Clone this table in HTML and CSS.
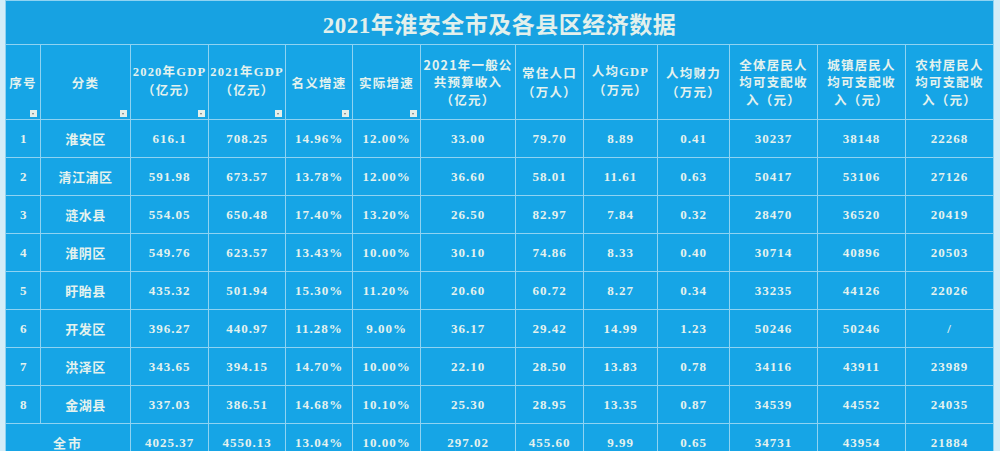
FILE: index.html
```html
<!DOCTYPE html>
<html lang="zh">
<head>
<meta charset="utf-8">
<title>2021年淮安全市及各县区经济数据</title>
<link rel="stylesheet" href="styles.css">
</head>
<body>
<div class="page">
<table class="data">
<colgroup>
<col class="c-seq"><col class="c-name"><col class="c-gdp20"><col class="c-gdp21"><col class="c-nom"><col class="c-real"><col class="c-budget"><col class="c-pop"><col class="c-pgdp"><col class="c-pfin"><col class="c-inc"><col class="c-inc"><col class="c-inc">
</colgroup>
<thead>
<tr class="title-row"><th colspan="13" class="title">2021年淮安全市及各县区经济数据</th></tr>
<tr class="head-row">
<th class="hf">序号<span class="filter"></span></th>
<th class="hf">分类<span class="filter"></span></th>
<th class="hf num-h">2020年GDP<br>（亿元）<span class="filter"></span></th>
<th class="hf num-h">2021年GDP<br>（亿元）<span class="filter"></span></th>
<th class="hf">名义增速<span class="filter"></span></th>
<th class="hf">实际增速<span class="filter"></span></th>
<th class="h3">2021年一般公<br>共预算收入<br>（亿元）</th>
<th>常住人口<br>（万人）</th>
<th class="num-h">人均GDP<br>（万元）</th>
<th>人均财力<br>（万元）</th>
<th class="h3">全体居民人<br>均可支配收<br>入（元）</th>
<th class="h3">城镇居民人<br>均可支配收<br>入（元）</th>
<th class="h3">农村居民人<br>均可支配收<br>入（元）</th>
</tr>
</thead>
<tbody>
<tr><td class="seq">1</td><td class="name">淮安区</td><td>616.1</td><td>708.25</td><td>14.96%</td><td>12.00%</td><td>33.00</td><td>79.70</td><td>8.89</td><td>0.41</td><td>30237</td><td>38148</td><td>22268</td></tr>
<tr><td class="seq">2</td><td class="name">清江浦区</td><td>591.98</td><td>673.57</td><td>13.78%</td><td>12.00%</td><td>36.60</td><td>58.01</td><td>11.61</td><td>0.63</td><td>50417</td><td>53106</td><td>27126</td></tr>
<tr><td class="seq">3</td><td class="name">涟水县</td><td>554.05</td><td>650.48</td><td>17.40%</td><td>13.20%</td><td>26.50</td><td>82.97</td><td>7.84</td><td>0.32</td><td>28470</td><td>36520</td><td>20419</td></tr>
<tr><td class="seq">4</td><td class="name">淮阴区</td><td>549.76</td><td>623.57</td><td>13.43%</td><td>10.00%</td><td>30.10</td><td>74.86</td><td>8.33</td><td>0.40</td><td>30714</td><td>40896</td><td>20503</td></tr>
<tr><td class="seq">5</td><td class="name">盱眙县</td><td>435.32</td><td>501.94</td><td>15.30%</td><td>11.20%</td><td>20.60</td><td>60.72</td><td>8.27</td><td>0.34</td><td>33235</td><td>44126</td><td>22026</td></tr>
<tr><td class="seq">6</td><td class="name">开发区</td><td>396.27</td><td>440.97</td><td>11.28%</td><td>9.00%</td><td>36.17</td><td>29.42</td><td>14.99</td><td>1.23</td><td>50246</td><td>50246</td><td>/</td></tr>
<tr><td class="seq">7</td><td class="name">洪泽区</td><td>343.65</td><td>394.15</td><td>14.70%</td><td>10.00%</td><td>22.10</td><td>28.50</td><td>13.83</td><td>0.78</td><td>34116</td><td>43911</td><td>23989</td></tr>
<tr><td class="seq">8</td><td class="name">金湖县</td><td>337.03</td><td>386.51</td><td>14.68%</td><td>10.10%</td><td>25.30</td><td>28.95</td><td>13.35</td><td>0.87</td><td>34539</td><td>44552</td><td>24035</td></tr>
<tr class="total"><td colspan="2" class="name">全市</td><td>4025.37</td><td>4550.13</td><td>13.04%</td><td>10.00%</td><td>297.02</td><td>455.60</td><td>9.99</td><td>0.65</td><td>34731</td><td>43954</td><td>21884</td></tr>
</tbody>
</table>
</div>
</body>
</html>
```
FILE: styles.css
```css
html, body {
  margin: 0;
  padding: 0;
  background: #d3edf8;
  overflow: hidden;
}
.page {
  padding-left: 5px;
  width: 988px;
}
.data {
  table-layout: fixed;
  border-collapse: collapse;
  width: 988px;
  background: #16a5e6;
  color: #e4f2ee;
  font-family: "Liberation Serif", "Noto Sans CJK SC", serif;
  font-size: 13px;
}
.c-seq { width: 35px; }
.c-name { width: 90px; }
.c-gdp20 { width: 78px; }
.c-gdp21 { width: 77px; }
.c-nom { width: 67px; }
.c-real { width: 68px; }
.c-budget { width: 95px; }
.c-pop { width: 68px; }
.c-pgdp { width: 74px; }
.c-pfin { width: 72px; }
.c-inc { width: 88px; }
.data th, .data td {
  border: 1px solid #8fd3f2;
  padding: 0;
  text-align: center;
  vertical-align: middle;
}
.title-row { height: 44px; }
.title {
  font-family: "Liberation Serif", "Noto Sans CJK SC", serif;
  font-size: 23px;
  font-weight: 700;
  color: #e2f0ec;
  letter-spacing: 0.5px;
  background: #17a2e2;
  border-top-color: #c8e9f6;
}
.head-row { height: 75px; }
.head-row th {
  position: relative;
  font-family: "Noto Sans CJK SC", sans-serif;
  font-size: 12.5px;
  font-weight: 700;
  letter-spacing: 1.2px;
  line-height: 19px;
}
.head-row th.h3 { line-height: 17.5px; }
.head-row th.num-h { font-family: "Liberation Serif", "Noto Sans CJK SC", serif; }
.filter {
  position: absolute;
  right: 3px;
  bottom: 2px;
  width: 7px;
  height: 7px;
  background: #e6efe9;
}
.filter::after {
  content: "";
  position: absolute;
  left: 2px;
  top: 3px;
  border-left: 1.5px solid transparent;
  border-right: 1.5px solid transparent;
  border-top: 2px solid #6d7a80;
}
.data tbody tr { height: 38px; }
.data td {
  font-weight: 700;
  letter-spacing: 1px;
}
.data td.seq {
  text-align: left;
  padding-left: 14px;
  letter-spacing: 0;
}
.data td.name {
  font-family: "Noto Sans CJK SC", sans-serif;
  font-size: 13px;
  letter-spacing: 0.5px;
}
.total td.name { letter-spacing: 2px; }
```
